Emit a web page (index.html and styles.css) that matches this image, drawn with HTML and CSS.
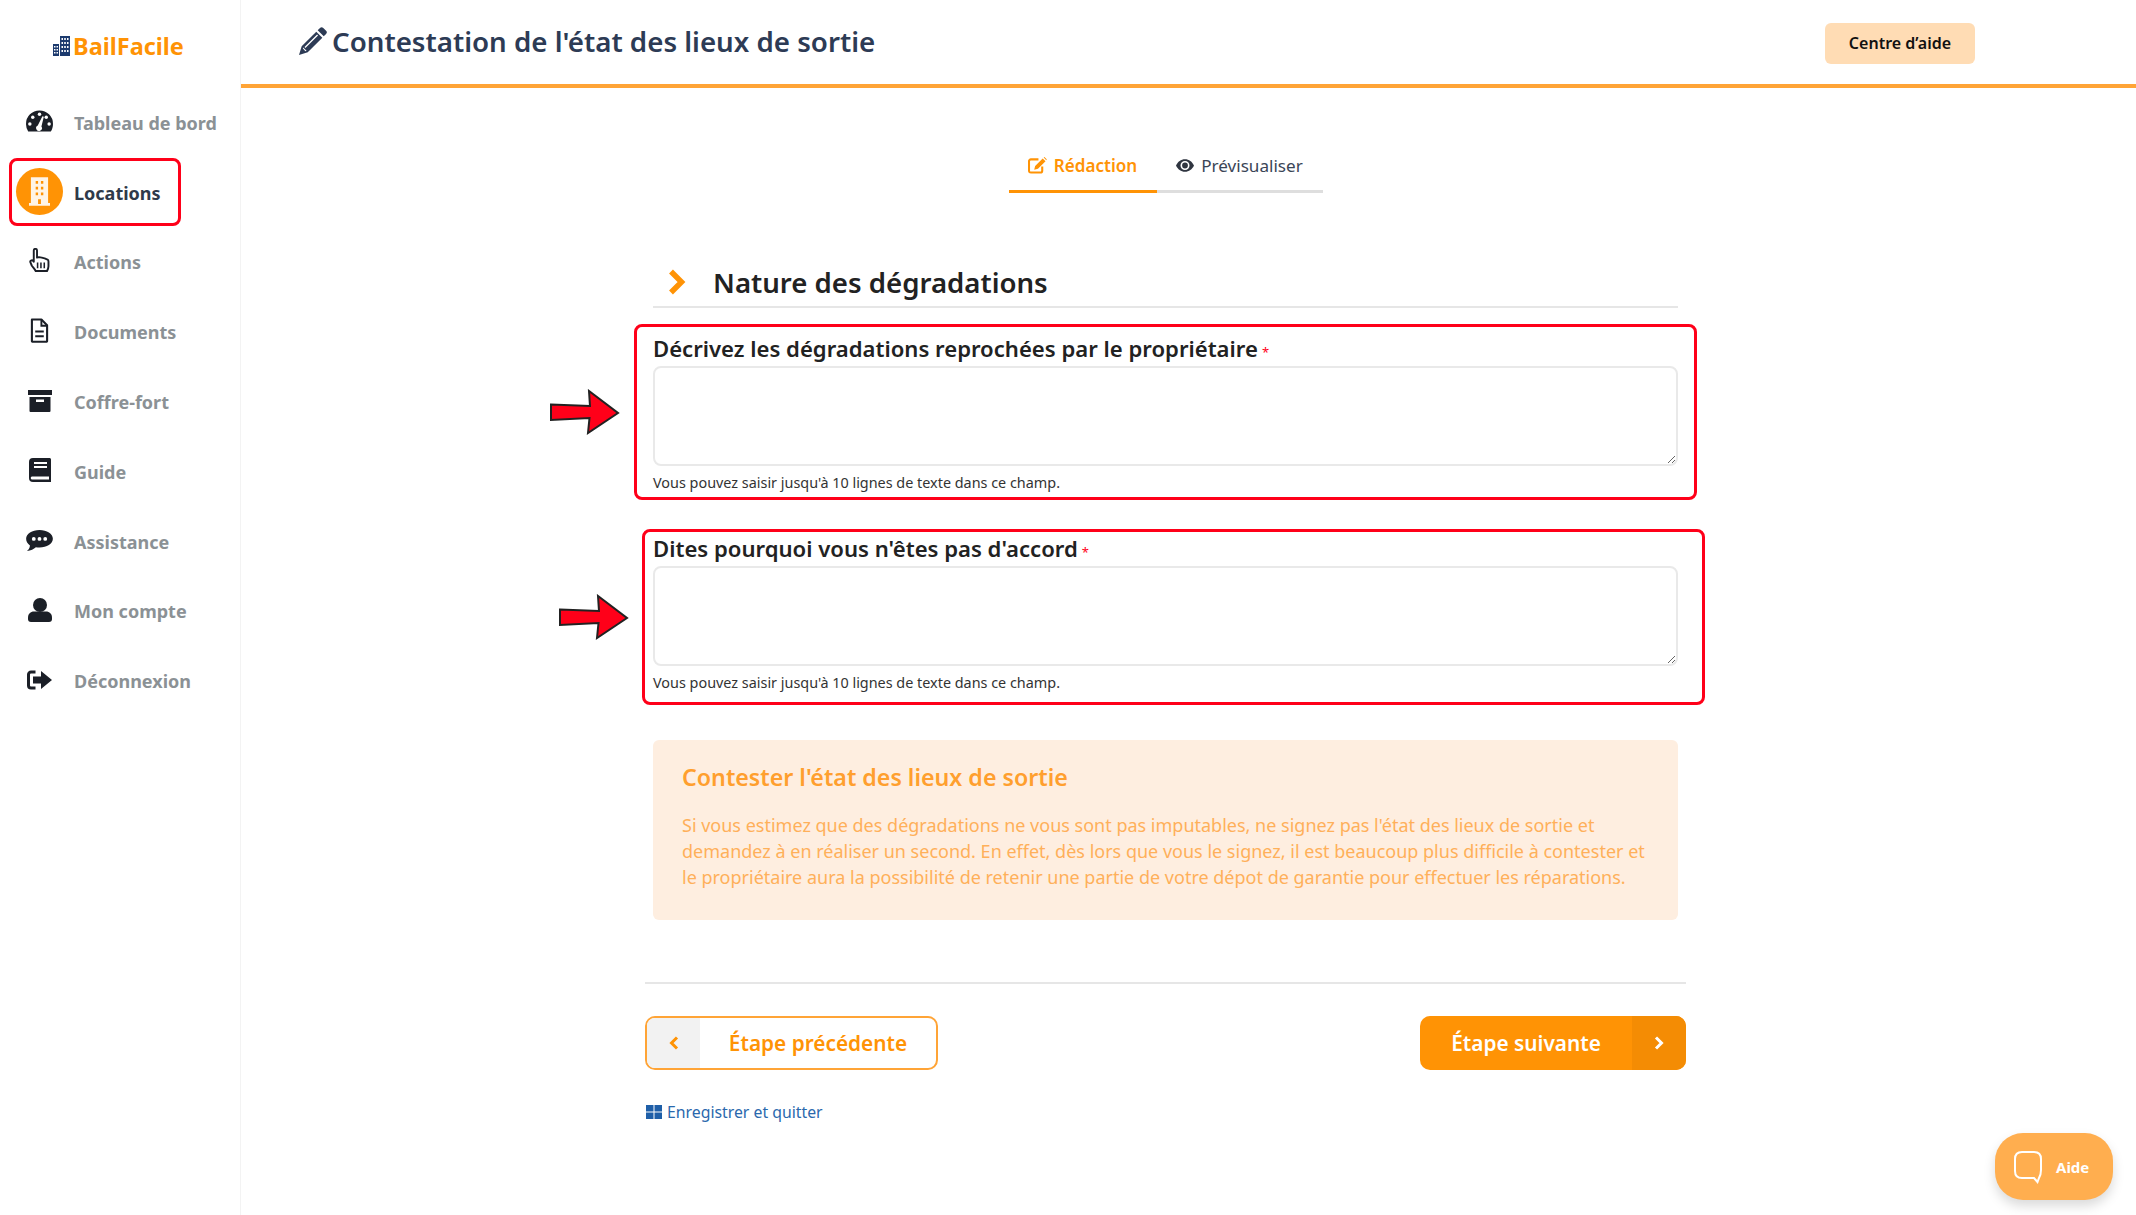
FILE: index.html
```html
<!DOCTYPE html>
<html lang="fr">
<head>
  <meta charset="UTF-8" />
  <title>Contestation de l'état des lieux de sortie</title>
  <link rel="stylesheet" href="styles.css">
</head>
<body>
  <aside class="sidebar">
    <div class="logo">
      <svg class="logo-icon" viewBox="0 0 17 20" width="17" height="20">
        <path fill="#1c3a6e" d="M0 8h6V20H0zM7 0h10v20H7z"/>
        <path fill="#fff" d="M1 10h1.500v1.500H1zM3.500 10H5v1.500H3.500zM1 13h1.500v1.500H1zM3.500 13H5v1.500H3.500zM1 16h1.500v1.500H1zM3.500 16H5v1.500H3.500zM8.500 2H10v2H8.500zM11.200 2h1.600v2h-1.600zM14 2h1.500v2H14zM8.500 6H10v2H8.500zM11.200 6h1.600v2h-1.600zM14 6h1.500v2H14zM8.500 10H10v2H8.500zM11.200 10h1.600v2h-1.600zM14 10h1.500v2H14zM8.500 14H10v2H8.500zM11.200 14h1.600v2h-1.600zM14 14h1.500v2H14z"/>
      </svg>
      <span>BailFacile</span>
    </div>
    <nav class="menu">
      <a class="menu-item">
        <span class="menu-icon">
          <svg viewBox="0 0 28 22" width="27" height="22"><path fill="#1b1f27" d="M14 0a14 14 0 0 1 14 14c0 3-.8 5.500-2.300 8H2.300A14.500 14.500 0 0 1 0 14 14 14 0 0 1 14 0z"/><g fill="#fff"><circle cx="14" cy="4" r="1.800"/><circle cx="7" cy="7" r="1.800"/><circle cx="21" cy="7" r="1.800"/><circle cx="4" cy="14" r="1.800"/><circle cx="24" cy="14" r="1.800"/><path d="M17 6l1.500.6-2.500 10a3 3 0 1 1-3.800-1z"/></g></svg>
        </span>
        <span>Tableau de bord</span>
      </a>
      <a class="menu-item active">
        <span class="menu-icon">
          <span class="active-circle">
            <svg viewBox="0 0 22 30" width="21" height="29"><path fill="#fff4e6" d="M2 0h18v27h2v3H0v-3h2z"/><g fill="#ff9305"><path d="M7 4h2.500v3H7zM12.500 4H15v3h-2.500zM7 10h2.500v3H7zM12.500 10H15v3h-2.500zM7 16h2.500v3H7zM12.500 16H15v3h-2.500zM9.500 23h3v5h-3z"/></g></svg>
          </span>
        </span>
        <span>Locations</span>
        <span class="highlight"></span>
      </a>
      <a class="menu-item">
        <span class="menu-icon">
          <svg viewBox="0 0 22 26" width="21" height="25"><path fill="#fff" stroke="#1b1f27" stroke-width="2" stroke-linejoin="round" d="M5 2.500a1.700 1.700 0 0 1 3.400 0V10l2-.5 3 .5 3 .8 3 1.200c.8.500 1 1 1 2v5c0 2-.5 3-1.500 5H7c-1-2-2.500-3.500-4-5.500L1.500 15c-.8-1.500 1.500-3 3-1.500l.5.800z"/><path stroke="#1b1f27" stroke-width="1.600" d="M9 15v6M12.500 15v6M16 15v6"/></svg>
        </span>
        <span>Actions</span>
      </a>
      <a class="menu-item">
        <span class="menu-icon">
          <svg viewBox="0 0 20 26" width="19" height="25"><path fill="#fff" stroke="#1b1f27" stroke-width="2.200" stroke-linejoin="round" d="M2 1.500h10l6 6V24a.8.800 0 0 1-.8.8H2.800A.8.800 0 0 1 2 24z"/><path fill="#1b1f27" d="M11 1.500h2V7h5v2h-7zM5.500 13h9v2h-9zM5.500 18h9v2h-9z"/></svg>
        </span>
        <span>Documents</span>
      </a>
      <a class="menu-item">
        <span class="menu-icon">
          <svg viewBox="0 0 24 22" width="24" height="22"><path fill="#1b1f27" d="M0 0h24v5H0zM1.500 7h21v14a1 1 0 0 1-1 1h-19a1 1 0 0 1-1-1z"/><path fill="#fff" d="M8 9.500h8V12H8z"/></svg>
        </span>
        <span>Coffre-fort</span>
      </a>
      <a class="menu-item">
        <span class="menu-icon">
          <svg viewBox="0 0 22 24" width="22" height="24"><path fill="#1b1f27" d="M4 0h16.500c.8 0 1.500.7 1.500 1.500V24H4a4 4 0 0 1-4-4V4a4 4 0 0 1 4-4z"/><path fill="#fff" d="M5 4h13v2H5zM5 8h13v2H5zM3 18.500h17v3H3.500a1.500 1.500 0 0 1-.5-3z"/></svg>
        </span>
        <span>Guide</span>
      </a>
      <a class="menu-item">
        <span class="menu-icon">
          <svg viewBox="0 0 28 22" width="27" height="21"><path fill="#1b1f27" d="M14 0c7.700 0 14 4 14 9.200s-6.300 9.200-14 9.200c-1.400 0-2.600-.1-3.800-.4C8 20 5 21.600.8 22c1.800-1.500 3-3.300 3.200-5.800C1.500 14.600 0 12 0 9.200 0 4 6.300 0 14 0z"/><g fill="#fff"><circle cx="8" cy="9.300" r="2"/><circle cx="14" cy="9.300" r="2"/><circle cx="20" cy="9.300" r="2"/></g></svg>
        </span>
        <span>Assistance</span>
      </a>
      <a class="menu-item">
        <span class="menu-icon">
          <svg viewBox="0 0 24 24" width="24" height="24"><circle cx="12" cy="7" r="7" fill="#1b1f27"/><path fill="#1b1f27" d="M6 13.500h12c3.500 0 6 2.500 6 6V21a3 3 0 0 1-3 3H3a3 3 0 0 1-3-3v-1.500c0-3.500 2.500-6 6-6z"/></svg>
        </span>
        <span>Mon compte</span>
      </a>
      <a class="menu-item">
        <span class="menu-icon">
          <svg viewBox="0 0 25 20" width="25" height="20"><path fill="none" stroke="#1b1f27" stroke-width="3" d="M8.500 2H4a2.500 2.500 0 0 0-2.500 2.500v11A2.500 2.500 0 0 0 4 18h4.500"/><path fill="#1b1f27" d="M6 6.500h8V1l11 9-11 9v-5.500H6z"/></svg>
        </span>
        <span>Déconnexion</span>
      </a>
    </nav>
  </aside>

  <div class="main">
    <header class="topbar">
      <h1>
        <svg viewBox="0 0 24 24" width="28" height="28"><path fill="#2d3b55" d="M18 0.800a2 2 0 0 1 2.800 0l2.400 2.400a2 2 0 0 1 0 2.800l-2 2L16 2.800zM14.800 4l5.200 5.200L7.500 21.700 0 24l2.300-7.500z"/><path fill="#fff" d="M3.600 17.500l2.900 2.900-1 .3-2.200-2.200zM15.500 6.500l.8.800L5.500 18l-.8-.8z"/></svg>
        Contestation de l'état des lieux de sortie
      </h1>
      <a class="help-center">Centre d’aide</a>
    </header>

    <div class="content">
      <div class="tabs">
        <a class="tab tab-active">
          <svg viewBox="0 0 20 18" width="19" height="17"><path fill="none" stroke="#ff9305" stroke-width="2.200" d="M15 10v4.500a2 2 0 0 1-2 2H3a2 2 0 0 1-2-2v-10a2 2 0 0 1 2-2h8"/><path fill="#ff9305" d="M15.500 1.500l3 3-8 8-4 1 1-4zM16.500.5l.8-.5 2.500 2.500-.5 1z"/></svg>
          Rédaction
        </a>
        <a class="tab">
          <svg viewBox="0 0 20 14" width="18" height="13"><path fill="#2f3540" fill-rule="evenodd" d="M10 0c4.500 0 8 2.700 10 7-2 4.300-5.500 7-10 7S2 11.300 0 7c2-4.300 5.500-7 10-7zm0 2a5 5 0 1 0 0 10 5 5 0 0 0 0-10z"/><circle cx="10" cy="7" r="3.200" fill="#2f3540"/></svg>
          Prévisualiser
        </a>
      </div>

      <div class="form">
        <h2 class="section-title">
          <svg viewBox="0 0 18 26" width="18" height="26"><path fill="none" stroke="#ff9305" stroke-width="5.500" d="M3 2.500L13.500 13 3 23.500"/></svg>
          Nature des dégradations
        </h2>

        <div class="field field-first">
          <span class="highlight highlight-first"></span>
          <svg class="arrow arrow-first" viewBox="0 0 70 46" width="70" height="46"><path fill="#ff0019" stroke="#222" stroke-width="2" d="M1 15.500l39 1.500L39 2l29 22-30 20 1.500-15L1 31z"/></svg>
          <label>Décrivez les dégradations reprochées par le propriétaire<sup>*</sup></label>
          <textarea></textarea>
          <p class="hint">Vous pouvez saisir jusqu'à 10 lignes de texte dans ce champ.</p>
        </div>

        <div class="field">
          <span class="highlight highlight-second"></span>
          <svg class="arrow arrow-second" viewBox="0 0 70 46" width="70" height="46"><path fill="#ff0019" stroke="#222" stroke-width="2" d="M1 15.500l39 1.500L39 2l29 22-30 20 1.500-15L1 31z"/></svg>
          <label>Dites pourquoi vous n'êtes pas d'accord<sup>*</sup></label>
          <textarea></textarea>
          <p class="hint">Vous pouvez saisir jusqu'à 10 lignes de texte dans ce champ.</p>
        </div>

        <div class="info-box">
          <h3>Contester l'état des lieux de sortie</h3>
          <p>Si vous estimez que des dégradations ne vous sont pas imputables, ne signez pas l'état des lieux de sortie et demandez à en réaliser un second. En effet, dès lors que vous le signez, il est beaucoup plus difficile à contester et le propriétaire aura la possibilité de retenir une partie de votre dépot de garantie pour effectuer les réparations.</p>
        </div>
      </div>

      <div class="actions">
        <a class="btn btn-prev">
          <span class="btn-side">
            <svg viewBox="0 0 10 14" width="10" height="14"><path fill="none" stroke="#ff9305" stroke-width="3" d="M8 1.500L2.500 7 8 12.500"/></svg>
          </span>
          <span class="btn-label">Étape précédente</span>
        </a>
        <a class="btn btn-next">
          <span class="btn-label">Étape suivante</span>
          <span class="btn-side">
            <svg viewBox="0 0 10 14" width="10" height="14"><path fill="none" stroke="#fff" stroke-width="3" d="M2 1.500L7.500 7 2 12.500"/></svg>
          </span>
        </a>
      </div>

      <a class="save-link">
        <svg viewBox="0 0 16 14" width="16" height="14"><path fill="#1f5fa8" d="M0 0h7.500v6.500H0zM8.500 0H16v6.500H8.500zM0 7.500h7.500V14H0zM8.500 7.500H16V14H8.500z"/></svg>
        Enregistrer et quitter
      </a>
    </div>
  </div>

  <a class="help-bubble">
    <svg viewBox="0 0 30 34" width="30" height="34"><path fill="none" stroke="#fff" stroke-width="2" d="M9 2h12c4.500 0 7 2.500 7 7v11c0 3-.8 6-2 8l-1.500 4-3.500-4H9c-4.500 0-7-2.500-7-7V9c0-4.500 2.500-7 7-7z"/></svg>
    Aide
  </a>
</body>
</html>
```

FILE: styles.css
```css
:root {
  --orange: #ff9305;
  --red: #ff0019;
  --navy: #2d3b55;
  --line: #e6e6e6;
}
html, body {
  margin: 0;
  padding: 0;
  height: 100%;
  font-family: "Noto Sans", Arial, sans-serif;
  background-color: #fff;
  color: #222;
}
body {
  display: flex;
  min-height: 1215px;
  overflow: hidden;
}
a {
  text-decoration: none;
}

/* Sidebar */
.sidebar {
  width: 241px;
  flex-shrink: 0;
  border-right: 1px solid #f3f3f3;
  box-sizing: border-box;
}
.logo {
  height: 88px;
  padding: 4px 0 0 53px;
  box-sizing: border-box;
  display: flex;
  align-items: center;
  gap: 3px;
  font-size: 23.5px;
  font-weight: 700;
  color: var(--orange);
}
.menu {
  display: flex;
  flex-direction: column;
}
.menu-item {
  position: relative;
  height: 69.8px;
  display: flex;
  align-items: center;
  font-size: 18px;
  font-weight: 700;
  color: #8b9195;
}
.menu-icon {
  width: 74px;
  padding-left: 5px;
  box-sizing: border-box;
  flex-shrink: 0;
  display: flex;
  justify-content: center;
  align-items: center;
  margin-top: -3px;
}
.menu-item.active {
  color: #2f3a4a;
}
.active-circle {
  width: 47px;
  height: 47px;
  border-radius: 50%;
  background-color: var(--orange);
  display: flex;
  align-items: center;
  justify-content: center;
}
.highlight {
  position: absolute;
  border: 3px solid var(--red);
  border-radius: 8px;
  box-sizing: border-box;
  pointer-events: none;
}
.menu-item .highlight {
  left: 9px;
  top: 0;
  width: 172px;
  height: 68px;
}

/* Top bar */
.main {
  flex-grow: 1;
  min-width: 0;
}
.topbar {
  height: 84px;
  border-bottom: 4px solid #ffa436;
  display: flex;
  align-items: center;
  justify-content: space-between;
  padding: 0 161px 0 58px;
}
.topbar h1 {
  margin: 0 0 2px 0;
  font-size: 27.7px;
  font-weight: 600;
  color: var(--navy);
  display: flex;
  align-items: center;
  gap: 5px;
}
.help-center {
  width: 150px;
  height: 41px;
  margin-top: 2px;
  display: flex;
  align-items: center;
  justify-content: center;
  background-color: #ffdcb4;
  border-radius: 6px;
  font-size: 16px;
  font-weight: 600;
  color: #111;
}

/* Content */
.content {
  width: 1041px;
  margin-left: 404px;
}
.tabs {
  display: flex;
  justify-content: center;
  margin-top: 42px;
}
.tab {
  height: 63px;
  padding-top: 10px;
  box-sizing: border-box;
  border-bottom: 3px solid #dedede;
  display: flex;
  align-items: center;
  justify-content: center;
  gap: 7px;
  font-size: 17.1px;
  color: #3a4556;
  width: 166px;
}
.tab-active {
  width: 148px;
  color: var(--orange);
  font-weight: 600;
  border-bottom-color: var(--orange);
}
.form {
  padding: 0 8px;
}
.section-title {
  margin: 54px 0 0 0;
  height: 61px;
  box-sizing: border-box;
  border-bottom: 2px solid var(--line);
  padding: 10px 0 0 15px;
  display: flex;
  align-items: center;
  gap: 27px;
  font-size: 27.6px;
  font-weight: 600;
  color: #222;
}
.field {
  position: relative;
  height: 200px;
}
.field-first {
  margin-top: 23px;
}
.field label {
  display: block;
  font-size: 22.1px;
  font-weight: 600;
  line-height: 35px;
  height: 35px;
}
.field label sup {
  color: var(--red);
  font-size: 13px;
  font-weight: 400;
  line-height: 0;
  margin-left: 4px;
  vertical-align: 0;
}
.field textarea {
  display: block;
  width: 100%;
  height: 100px;
  box-sizing: border-box;
  border: 2px solid #e9e9e9;
  border-radius: 8px;
  background-color: #fff;
  margin: 0;
  padding: 8px;
  resize: vertical;
}
.hint {
  margin: 7px 0 0 0;
  font-size: 14.4px;
  line-height: 20px;
  color: #333;
}
.highlight-first {
  left: -19px;
  top: -7px;
  width: 1063px;
  height: 176px;
}
.highlight-second {
  left: -11px;
  top: -2px;
  width: 1063px;
  height: 176px;
}
.arrow {
  position: absolute;
  top: 58px;
}
.arrow-first {
  left: -103px;
}
.arrow-second {
  left: -94px;
  top: 63px;
}
.info-box {
  margin-top: 9px;
  height: 180px;
  box-sizing: border-box;
  background-color: #feeee0;
  border-radius: 6px;
  padding: 20px 29px;
}
.info-box h3 {
  margin: 0;
  font-size: 23.2px;
  line-height: 34px;
  font-weight: 600;
  color: #ff9f2e;
}
.info-box p {
  margin: 18px 0 0 0;
  font-size: 18px;
  line-height: 26px;
  color: #ffb05a;
}

/* Buttons */
.actions {
  margin-top: 62px;
  padding-top: 32px;
  border-top: 2px solid var(--line);
  display: flex;
  justify-content: space-between;
}
.btn {
  height: 54px;
  box-sizing: border-box;
  display: flex;
  align-items: stretch;
  border-radius: 10px;
  overflow: hidden;
  font-size: 20.8px;
  font-weight: 600;
}
.btn-side {
  width: 53px;
  display: flex;
  align-items: center;
  justify-content: center;
}
.btn-label {
  flex-grow: 1;
  display: flex;
  align-items: center;
  justify-content: center;
}
.btn-prev {
  width: 293px;
  border: 2px solid #ffa436;
  color: var(--orange);
}
.btn-prev .btn-side {
  background-color: #f2f2f2;
}
.btn-next {
  width: 266px;
  background-color: var(--orange);
  color: #fff;
}
.btn-next .btn-side {
  width: 54px;
  background-color: #f48c04;
}
.save-link {
  margin-top: 30px;
  padding-left: 1px;
  display: flex;
  align-items: center;
  gap: 5px;
  font-size: 15.8px;
  line-height: 24px;
  color: #2a68ad;
}

/* Floating help */
.help-bubble {
  position: absolute;
  left: 1995px;
  top: 1133px;
  width: 118px;
  height: 67px;
  box-sizing: border-box;
  padding-left: 18px;
  display: flex;
  align-items: center;
  gap: 13px;
  border-radius: 28px;
  background-color: #ffae4f;
  box-shadow: 0 6px 12px rgba(0, 0, 0, 0.15);
  color: #fff;
  font-size: 15px;
  font-weight: 700;
}
```
